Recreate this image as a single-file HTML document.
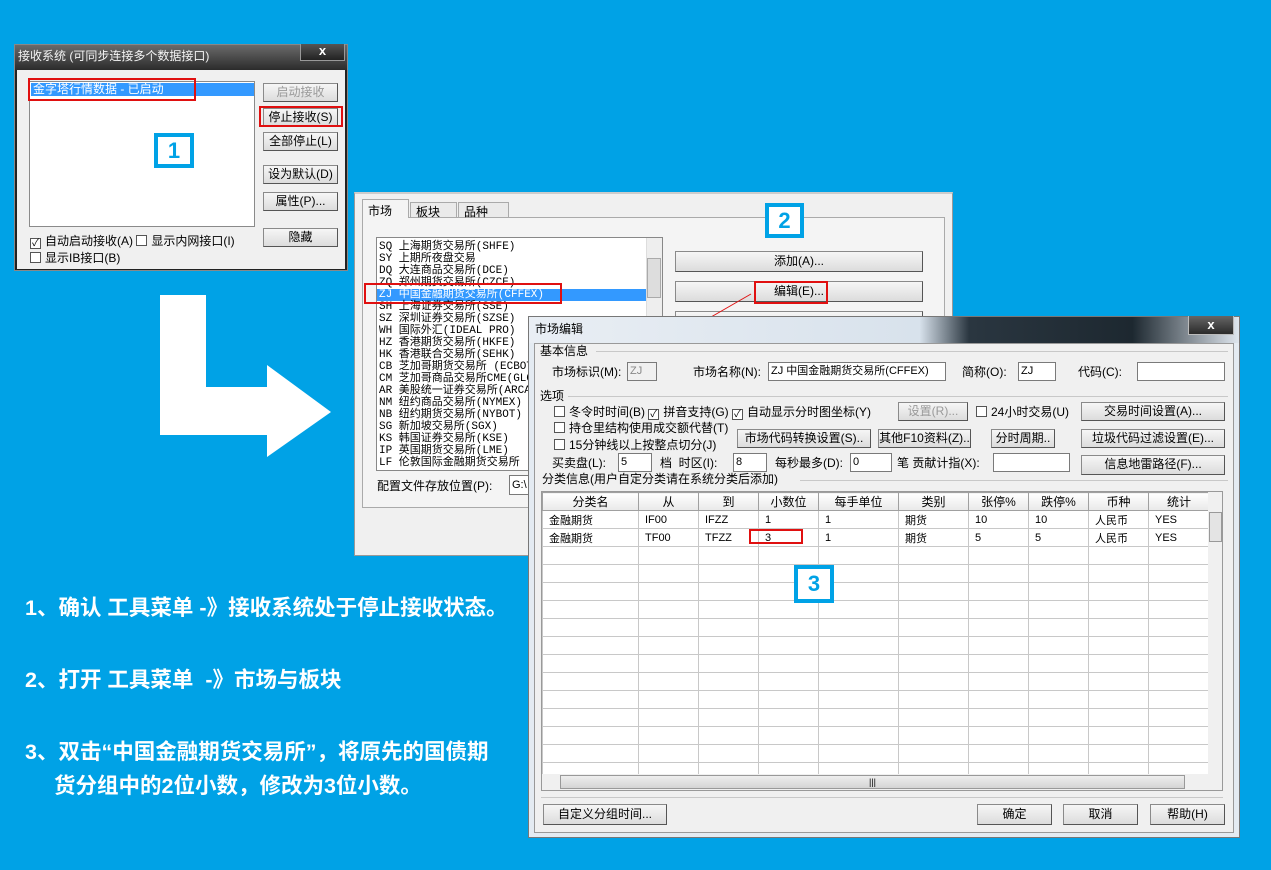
<!DOCTYPE html>
<html><head><meta charset="utf-8"><style>
*{margin:0;padding:0;box-sizing:border-box}
body{width:1271px;height:870px;background:#00a2e6;position:relative;overflow:hidden;font-family:"Liberation Sans","Noto Sans CJK SC",sans-serif;font-size:12px;color:#000}
.a{position:absolute}
.dlg{background:#f0f0f0}
.btn{position:absolute;background:linear-gradient(#f6f6f6,#dcdcdc);border:1px solid #8a8a8a;border-right-color:#555;border-bottom-color:#555;text-align:center;font-size:12px;line-height:17px;white-space:nowrap;overflow:hidden}
.inp{position:absolute;background:#fff;border:1px solid #7a7a7a;font-size:11px;line-height:16px;padding-left:2px;white-space:nowrap;overflow:hidden}
.lbl{position:absolute;font-size:12px;white-space:nowrap;line-height:14px}
.cb{display:inline-block;width:11px;height:11px;border:1px solid #555;background:#fff;vertical-align:-1px;margin-right:4px;font-size:10px;line-height:9px;text-align:center}
.red{position:absolute;border:2px solid #e01010}
.num{position:absolute;background:#fff;border:4px solid #00a2e6;color:#00a2e6;font-weight:bold;font-size:22px;text-align:center}
.list div{white-space:nowrap;height:12px;line-height:12px;font-family:"Liberation Mono","Noto Sans CJK SC",monospace;font-size:11px;padding-left:2px}
.grp{position:absolute;border-top:1px solid #c8c8c8;height:0}
.txt{position:absolute;color:#fff;font-weight:bold;font-size:21.5px;white-space:nowrap;font-family:"Liberation Sans","Noto Sans CJK SC",sans-serif}
table{border-collapse:collapse;table-layout:fixed}
td{border:1px solid #c8c8c8;height:18px;font-size:11px;padding-left:6px;white-space:nowrap;overflow:hidden}
th{border:1px solid #a0a0a0;height:18px;font-size:12px;font-weight:normal;background:linear-gradient(#fff,#e8e8e8)}
</style></head><body>

<!-- Dialog 1 -->
<div class="a" style="left:14px;top:44px;width:334px;height:227px;background:#222;border:1px solid #888"></div>
<div class="a" style="left:15px;top:45px;width:332px;height:25px;background:linear-gradient(#6a6a6a,#2b2b2b)"></div>
<div class="lbl" style="left:18px;top:49px;color:#f4f4f4;font-size:12px">接收系统 (可同步连接多个数据接口)</div>
<div class="a" style="left:300px;top:44px;width:45px;height:17px;background:linear-gradient(#555,#222);border:1px solid #999;border-top:none;color:#fff;text-align:center;font-weight:bold;font-size:13px;line-height:14px">x</div>
<div class="a dlg" style="left:17px;top:70px;width:328px;height:199px"></div>
<div class="a" style="left:29px;top:81px;width:226px;height:146px;background:#fff;border:1px solid #8a8a8a"></div>
<div class="a" style="left:31px;top:83px;width:223px;height:13px;background:#3399ff;color:#fff;font-size:12px;line-height:13px;padding-left:2px">金字塔行情数据 - 已启动</div>
<div class="btn" style="left:263px;top:83px;width:75px;height:19px;color:#999">启动接收</div>
<div class="btn" style="left:263px;top:108px;width:75px;height:19px">停止接收(S)</div>
<div class="btn" style="left:263px;top:132px;width:75px;height:19px">全部停止(L)</div>
<div class="btn" style="left:263px;top:165px;width:75px;height:19px">设为默认(D)</div>
<div class="btn" style="left:263px;top:192px;width:75px;height:19px">属性(P)...</div>
<div class="btn" style="left:263px;top:228px;width:75px;height:19px">隐藏</div>
<div class="lbl" style="left:30px;top:234px"><span class="cb">✓</span>自动启动接收(A) <span class="cb"></span>显示内网接口(I)</div>
<div class="lbl" style="left:30px;top:251px"><span class="cb"></span>显示IB接口(B)</div>
<div class="red" style="left:28px;top:78px;width:168px;height:23px"></div>
<div class="red" style="left:259px;top:106px;width:84px;height:21px"></div>
<div class="num" style="left:154px;top:133px;width:40px;height:35px;line-height:27px">1</div>

<!-- Arrow -->
<svg class="a" style="left:0;top:0" width="400" height="500"><path d="M160 295H206V387H267V365L331 412L267 457V435H160Z" fill="#fff"/></svg>

<!-- Dialog 2 -->
<div class="a dlg" style="left:354px;top:192px;width:599px;height:364px;border:1px solid #999;border-top:2px solid #ccc"></div>
<div class="a" style="left:362px;top:217px;width:583px;height:291px;border:1px solid #aaa;background:#f4f4f4"></div>
<div class="a" style="left:362px;top:199px;width:47px;height:19px;background:#f4f4f4;border:1px solid #aaa;border-bottom:none;padding:2px 5px">市场</div>
<div class="a" style="left:410px;top:202px;width:47px;height:15px;background:#eaeaea;border:1px solid #aaa;border-bottom:none;padding:0 5px">板块</div>
<div class="a" style="left:458px;top:202px;width:51px;height:15px;background:#eaeaea;border:1px solid #aaa;border-bottom:none;padding:0 5px">品种</div>
<div class="a list" style="left:376px;top:237px;width:287px;height:234px;background:#fff;border:1px solid #888;padding-top:3px;overflow:hidden">
<div>SQ 上海期货交易所(SHFE)</div><div>SY 上期所夜盘交易</div><div>DQ 大连商品交易所(DCE)</div><div>ZQ 郑州期货交易所(CZCE)</div>
<div style="background:#3399ff;color:#fff;width:269px">ZJ 中国金融期货交易所(CFFEX)</div>
<div>SH 上海证券交易所(SSE)</div><div>SZ 深圳证券交易所(SZSE)</div><div>WH 国际外汇(IDEAL PRO)</div><div>HZ 香港期货交易所(HKFE)</div><div>HK 香港联合交易所(SEHK)</div><div>CB 芝加哥期货交易所 (ECBOT)</div><div>CM 芝加哥商品交易所CME(GLOBEX)</div><div>AR 美股统一证券交易所(ARCA)</div><div>NM 纽约商品交易所(NYMEX)</div><div>NB 纽约期货交易所(NYBOT)</div><div>SG 新加坡交易所(SGX)</div><div>KS 韩国证券交易所(KSE)</div><div>IP 英国期货交易所(LME)</div><div>LF 伦敦国际金融期货交易所</div>
</div>
<div class="a" style="left:646px;top:238px;width:16px;height:232px;background:#eee;border-left:1px solid #ddd"></div>
<div class="a" style="left:647px;top:258px;width:14px;height:40px;background:#ddd;border:1px solid #aaa"></div>
<div class="btn" style="left:675px;top:251px;width:248px;height:21px;line-height:19px">添加(A)...</div>
<div class="btn" style="left:675px;top:281px;width:248px;height:21px;line-height:19px">编辑(E)...</div>
<div class="btn" style="left:675px;top:311px;width:248px;height:21px"></div>
<div class="lbl" style="left:377px;top:479px">配置文件存放位置(P):</div>
<div class="inp" style="left:509px;top:475px;width:30px;height:20px;line-height:18px">G:\</div>
<div class="red" style="left:364px;top:283px;width:198px;height:21px"></div>
<div class="red" style="left:754px;top:281px;width:74px;height:23px"></div>
<div class="num" style="left:765px;top:203px;width:39px;height:35px;line-height:27px">2</div>
<svg class="a" style="left:0;top:0" width="1271" height="870"><line x1="751" y1="294" x2="678" y2="336" stroke="#e01010" stroke-width="1"/><path d="M672 340L680 331L683 337Z" fill="#e01010"/></svg>

<!-- Dialog 3 -->
<div class="a" style="left:528px;top:316px;width:712px;height:522px;background:#e4ebf2;border:1px solid #777"></div>
<div class="a" style="left:529px;top:317px;width:710px;height:26px;background:linear-gradient(90deg,#e9eef4 0%,#d8e2ec 55%,#2a3640 62%,#1d2830 85%,#dfe6ee 100%)"></div>
<div class="lbl" style="left:535px;top:322px;font-size:12px">市场编辑</div>
<div class="a" style="left:1188px;top:316px;width:46px;height:19px;background:linear-gradient(#666,#2a2a2a);border:1px solid #bbb;border-top:none;color:#fff;text-align:center;font-weight:bold;font-size:13px;line-height:17px">x</div>
<div class="a dlg" style="left:534px;top:343px;width:700px;height:490px;border:1px solid #999"></div>
<div class="lbl" style="left:540px;top:344px">基本信息</div><div class="grp" style="left:596px;top:351px;width:632px"></div>
<div class="lbl" style="left:552px;top:365px">市场标识(M):</div><div class="inp" style="left:627px;top:362px;width:30px;height:19px;background:#f0f0f0;color:#888">ZJ</div>
<div class="lbl" style="left:693px;top:365px">市场名称(N):</div><div class="inp" style="left:768px;top:362px;width:178px;height:19px">ZJ 中国金融期货交易所(CFFEX)</div>
<div class="lbl" style="left:962px;top:365px">简称(O):</div><div class="inp" style="left:1018px;top:362px;width:38px;height:19px">ZJ</div>
<div class="lbl" style="left:1078px;top:365px">代码(C):</div><div class="inp" style="left:1137px;top:362px;width:88px;height:19px"></div>
<div class="lbl" style="left:540px;top:389px">选项</div><div class="grp" style="left:568px;top:396px;width:660px"></div>
<div class="lbl" style="left:554px;top:405px"><span class="cb"></span>冬令时时间(B) <span class="cb">✓</span>拼音支持(G) <span class="cb">✓</span>自动显示分时图坐标(Y)</div>
<div class="btn" style="left:898px;top:402px;width:70px;height:19px;color:#999">设置(R)...</div>
<div class="lbl" style="left:976px;top:405px"><span class="cb"></span>24小时交易(U)</div>
<div class="btn" style="left:1081px;top:402px;width:144px;height:19px">交易时间设置(A)...</div>
<div class="lbl" style="left:554px;top:421px"><span class="cb"></span>持仓里结构使用成交额代替(T)</div>
<div class="lbl" style="left:554px;top:438px"><span class="cb"></span>15分钟线以上按整点切分(J)</div>
<div class="btn" style="left:737px;top:429px;width:134px;height:19px">市场代码转换设置(S)..</div>
<div class="btn" style="left:878px;top:429px;width:93px;height:19px">其他F10资料(Z)..</div>
<div class="btn" style="left:991px;top:429px;width:64px;height:19px">分时周期..</div>
<div class="btn" style="left:1081px;top:429px;width:144px;height:19px">垃圾代码过滤设置(E)...</div>
<div class="lbl" style="left:552px;top:456px">买卖盘(L):</div><div class="inp" style="left:618px;top:453px;width:34px;height:19px">5</div>
<div class="lbl" style="left:660px;top:456px">档 &nbsp;时区(I):</div><div class="inp" style="left:733px;top:453px;width:34px;height:19px">8</div>
<div class="lbl" style="left:775px;top:456px">每秒最多(D):</div><div class="inp" style="left:850px;top:453px;width:42px;height:19px">0</div>
<div class="lbl" style="left:897px;top:456px">笔 贡献计指(X):</div><div class="inp" style="left:993px;top:453px;width:77px;height:19px"></div>
<div class="btn" style="left:1081px;top:455px;width:144px;height:20px">信息地雷路径(F)...</div>
<div class="lbl" style="left:542px;top:472px">分类信息(用户自定分类请在系统分类后添加)</div><div class="grp" style="left:800px;top:480px;width:428px"></div>

<div class="a" style="left:541px;top:491px;width:682px;height:300px;background:#fff;border:1px solid #999;overflow:hidden">
<table style="width:667px">
<colgroup><col style="width:96px"><col style="width:60px"><col style="width:60px"><col style="width:60px"><col style="width:80px"><col style="width:70px"><col style="width:60px"><col style="width:60px"><col style="width:60px"><col style="width:61px"></colgroup>
<tr><th>分类名</th><th>从</th><th>到</th><th>小数位</th><th>每手单位</th><th>类别</th><th>张停%</th><th>跌停%</th><th>币种</th><th>统计</th></tr>
<tr><td>金融期货</td><td>IF00</td><td>IFZZ</td><td>1</td><td>1</td><td>期货</td><td>10</td><td>10</td><td>人民币</td><td>YES</td></tr>
<tr><td>金融期货</td><td>TF00</td><td>TFZZ</td><td>3</td><td>1</td><td>期货</td><td>5</td><td>5</td><td>人民币</td><td>YES</td></tr>
<tr><td></td><td></td><td></td><td></td><td></td><td></td><td></td><td></td><td></td><td></td></tr>
<tr><td></td><td></td><td></td><td></td><td></td><td></td><td></td><td></td><td></td><td></td></tr>
<tr><td></td><td></td><td></td><td></td><td></td><td></td><td></td><td></td><td></td><td></td></tr>
<tr><td></td><td></td><td></td><td></td><td></td><td></td><td></td><td></td><td></td><td></td></tr>
<tr><td></td><td></td><td></td><td></td><td></td><td></td><td></td><td></td><td></td><td></td></tr>
<tr><td></td><td></td><td></td><td></td><td></td><td></td><td></td><td></td><td></td><td></td></tr>
<tr><td></td><td></td><td></td><td></td><td></td><td></td><td></td><td></td><td></td><td></td></tr>
<tr><td></td><td></td><td></td><td></td><td></td><td></td><td></td><td></td><td></td><td></td></tr>
<tr><td></td><td></td><td></td><td></td><td></td><td></td><td></td><td></td><td></td><td></td></tr>
<tr><td></td><td></td><td></td><td></td><td></td><td></td><td></td><td></td><td></td><td></td></tr>
<tr><td></td><td></td><td></td><td></td><td></td><td></td><td></td><td></td><td></td><td></td></tr>
<tr><td></td><td></td><td></td><td></td><td></td><td></td><td></td><td></td><td></td><td></td></tr>
<tr><td></td><td></td><td></td><td></td><td></td><td></td><td></td><td></td><td></td><td></td></tr>
</table>
<div class="a" style="left:666px;top:0;width:15px;height:282px;background:#f0f0f0"></div>
<div class="a" style="left:667px;top:20px;width:13px;height:30px;background:#e4e4e4;border:1px solid #999"></div>
<div class="a" style="left:0;top:282px;width:681px;height:17px;background:#f0f0f0"></div>
<div class="a" style="left:18px;top:283px;width:625px;height:14px;background:linear-gradient(#eee,#d4d4d4);border:1px solid #999;text-align:center;font-size:9px;line-height:12px">|||</div>
</div>
<div class="red" style="left:749px;top:529px;width:54px;height:15px"></div>
<div class="num" style="left:794px;top:565px;width:40px;height:38px;line-height:30px">3</div>
<div class="grp" style="left:541px;top:797px;width:682px"></div>
<div class="btn" style="left:543px;top:804px;width:124px;height:21px;line-height:19px">自定义分组时间...</div>
<div class="btn" style="left:977px;top:804px;width:75px;height:21px;line-height:19px">确定</div>
<div class="btn" style="left:1063px;top:804px;width:75px;height:21px;line-height:19px">取消</div>
<div class="btn" style="left:1150px;top:804px;width:75px;height:21px;line-height:19px">帮助(H)</div>

<!-- Instructions -->
<div class="txt" style="left:25px;top:591px">1、确认 工具菜单 -》接收系统处于停止接收状态。</div>
<div class="txt" style="left:25px;top:663px">2、打开 工具菜单 &nbsp;-》市场与板块</div>
<div class="txt" style="left:25px;top:735px">3、双击“中国金融期货交易所”，将原先的国债期</div>
<div class="txt" style="left:54px;top:769px">货分组中的2位小数，修改为3位小数。</div>
</body></html>
